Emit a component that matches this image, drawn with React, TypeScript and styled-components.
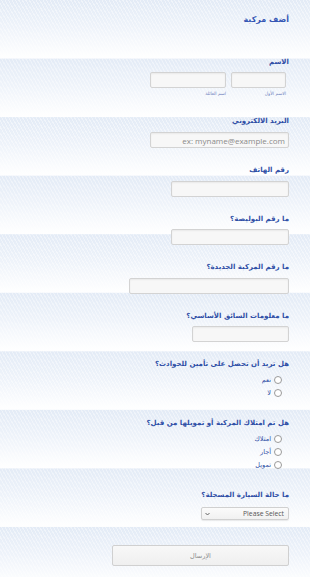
import styled, { createGlobalStyle } from "styled-components";

const GlobalStyle = createGlobalStyle`
  html, body {
    margin: 0;
    padding: 0;
  }
  body {
    min-height: 100vh;
    background-color: #fff;
    background-image:
      repeating-linear-gradient(
        60deg,
        rgba(255, 255, 255, 0.45) 0px,
        rgba(255, 255, 255, 0.45) 1px,
        rgba(255, 255, 255, 0) 1px,
        rgba(255, 255, 255, 0) 3px
      ),
      linear-gradient(to bottom, #e3ebf6 0%, #eef3fa 45%, #ffffff 100%);
    background-size: 100% 58.56px, 100% 58.56px;
    background-repeat: repeat;
    font-family: "DejaVu Sans", "Noto Sans", sans-serif;
  }
`;

const Form = styled.form`
  direction: rtl;
  padding: 13px 21px 0 0;
  display: flex;
  flex-direction: column;
  align-items: flex-start;
`;

const Header = styled.h2`
  margin: 0 0 29px;
  font-size: 8px;
  line-height: 14px;
  font-weight: bold;
  color: #3455b4;
`;

const Field = styled.div<{ $after?: number }>`
  display: flex;
  flex-direction: column;
  align-items: flex-start;
  margin-bottom: ${(p) => p.$after ?? 16}px;
`;

const Label = styled.label<{ $gap?: number }>`
  display: block;
  font-size: 7px;
  line-height: 12px;
  font-weight: bold;
  color: #2e4ea6;
  margin-bottom: ${(p) => p.$gap ?? 4.5}px;
  white-space: nowrap;
`;

const TextInput = styled.input<{ $w: number }>`
  box-sizing: border-box;
  width: ${(p) => p.$w}px;
  height: 16px;
  margin: 0;
  padding: 0 3px;
  border: 1px solid #d3d3d3;
  border-radius: 2px;
  background: #f7f7f7;
  box-shadow: inset 0 1px 2px rgba(0, 0, 0, 0.06);
  font-family: "Open Sans", "Liberation Sans", sans-serif;
  font-size: 8px;
  color: #555;
  direction: rtl;
  outline: none;
  &::placeholder {
    color: #8a8a8a;
  }
`;

const NameRow = styled.div`
  display: flex;
  gap: 5px;
  padding-right: 3px;
`;

const NamePart = styled.div`
  display: flex;
  flex-direction: column;
  align-items: flex-start;
`;

const SubLabel = styled.span`
  font-size: 4.5px;
  line-height: 9px;
  color: #6f84bd;
  padding-top: 1px;
`;

const RadioList = styled.div`
  display: flex;
  flex-direction: column;
  padding-right: 7px;
`;

const RadioRow = styled.label`
  display: flex;
  align-items: center;
  gap: 3px;
  height: 13px;
  font-size: 6.5px;
  color: #2e4ea6;
`;

const Radio = styled.input.attrs({ type: "radio" })`
  appearance: none;
  box-sizing: border-box;
  width: 8px;
  height: 8px;
  margin: 0;
  border: 1px solid #9a9a9a;
  border-radius: 50%;
  background: #fff;
`;

const Select = styled.div`
  box-sizing: border-box;
  width: 88px;
  height: 13px;
  display: flex;
  align-items: center;
  justify-content: space-between;
  padding: 0 4px 0 3px;
  border: 1px solid #d0d0d0;
  border-radius: 2px;
  background: linear-gradient(#fbfbfb, #f1f1f1);
  box-shadow: 0 1px 1px rgba(0, 0, 0, 0.08);
  font-family: "Open Sans", "Liberation Sans", sans-serif;
  font-size: 6.8px;
  color: #555;
`;

const Chevron = styled.svg`
  width: 5px;
  height: 4px;
`;

const SubmitButton = styled.button`
  box-sizing: border-box;
  width: 177px;
  height: 21px;
  margin: 0;
  border: 1px solid #d0d0d0;
  border-radius: 2px;
  background: linear-gradient(#f8f8f8, #efefef);
  font-family: "DejaVu Sans", sans-serif;
  font-size: 6.5px;
  color: #8c8c8c;
`;

function App() {
  return (
    <>
      <GlobalStyle />
      <Form>
        <Header>أضف مركبة</Header>

        <Field $after={17}>
          <Label $gap={4}>الاسم</Label>
          <NameRow>
            <NamePart>
              <TextInput $w={55} />
              <SubLabel>الاسم الأول</SubLabel>
            </NamePart>
            <NamePart>
              <TextInput $w={76} />
              <SubLabel>اسم العائلة</SubLabel>
            </NamePart>
          </NameRow>
        </Field>

        <Field>
          <Label $gap={5}>البريد الالكتروني</Label>
          <TextInput $w={139} placeholder="ex: myname@example.com" />
        </Field>

        <Field>
          <Label>رقم الهاتف</Label>
          <TextInput $w={118} />
        </Field>

        <Field>
          <Label>ما رقم البوليصة؟</Label>
          <TextInput $w={118} />
        </Field>

        <Field>
          <Label>ما رقم المركبة الجديدة؟</Label>
          <TextInput $w={160} />
        </Field>

        <Field>
          <Label>ما معلومات السائق الأساسي؟</Label>
          <TextInput $w={97} />
        </Field>

        <Field $after={17.5}>
          <Label $gap={3.5}>هل تريد أن تحصل على تأمين للحوادث؟</Label>
          <RadioList>
            <RadioRow>
              <Radio name="ins" />
              نعم
            </RadioRow>
            <RadioRow>
              <Radio name="ins" />
              لا
            </RadioRow>
          </RadioList>
        </Field>

        <Field $after={17.5}>
          <Label $gap={3.5}>هل تم امتلاك المركبة أو تمويلها من قبل؟</Label>
          <RadioList>
            <RadioRow>
              <Radio name="own" />
              امتلاك
            </RadioRow>
            <RadioRow>
              <Radio name="own" />
              أجار
            </RadioRow>
            <RadioRow>
              <Radio name="own" />
              تمويل
            </RadioRow>
          </RadioList>
        </Field>

        <Field $after={25}>
          <Label $gap={6}>ما حالة السيارة المسجلة؟</Label>
          <Select>
            <span>Please Select</span>
            <Chevron viewBox="0 0 10 6">
              <path d="M1 1 L5 5 L9 1" fill="none" stroke="#555" strokeWidth="1.8" />
            </Chevron>
          </Select>
        </Field>

        <SubmitButton type="button">الإرسال</SubmitButton>
      </Form>
    </>
  );
}

export default App;
